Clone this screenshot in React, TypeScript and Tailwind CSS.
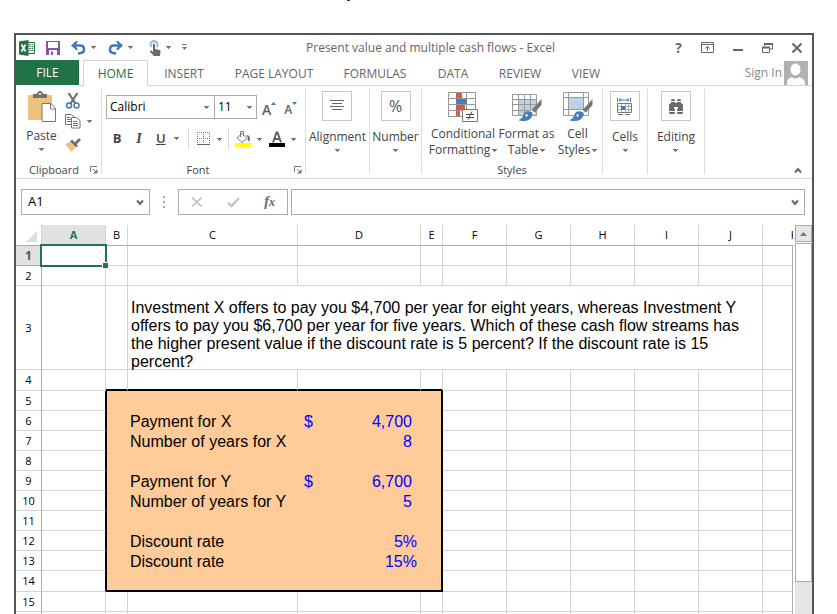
import React from 'react';
import { BsBinocularsFill } from 'react-icons/bs';

interface ColumnDef {
  name: string;
  width: string;
}

interface RowDef {
  id: number;
  height: string;
  label?: string;
  currency?: boolean;
  value?: string;
  percent?: boolean;
}

const tabs = [
  { name: 'INSERT', width: 'w-[72px]' },
  { name: 'PAGE LAYOUT', width: 'w-[108px]' },
  { name: 'FORMULAS', width: 'w-[94px]' },
  { name: 'DATA', width: 'w-[62px]' },
  { name: 'REVIEW', width: 'w-[72px]' },
  { name: 'VIEW', width: 'w-[60px]' },
];

// The last column has no width and takes what is left of the window
const columns: ColumnDef[] = [
  { name: 'A', width: 'w-16' },
  { name: 'B', width: 'w-[22px]' },
  { name: 'C', width: 'w-[170px]' },
  { name: 'D', width: 'w-[123px]' },
  { name: 'E', width: 'w-[22px]' },
  { name: 'F', width: 'w-16' },
  { name: 'G', width: 'w-16' },
  { name: 'H', width: 'w-16' },
  { name: 'I', width: 'w-16' },
  { name: 'J', width: 'w-16' },
  { name: 'K', width: '' },
];

const rows: RowDef[] = [
  { id: 1, height: 'h-5' },
  { id: 2, height: 'h-5' },
  { id: 3, height: 'h-[84px]' },
  { id: 4, height: 'h-[21px]' },
  { id: 5, height: 'h-5' },
  { id: 6, height: 'h-5', label: 'Payment for X', currency: true, value: '4,700' },
  { id: 7, height: 'h-5', label: 'Number of years for X', value: '8' },
  { id: 8, height: 'h-5' },
  { id: 9, height: 'h-5', label: 'Payment for Y', currency: true, value: '6,700' },
  { id: 10, height: 'h-5', label: 'Number of years for Y', value: '5' },
  { id: 11, height: 'h-5' },
  { id: 12, height: 'h-5', label: 'Discount rate', value: '5%', percent: true },
  { id: 13, height: 'h-5', label: 'Discount rate', value: '15%', percent: true },
  { id: 14, height: 'h-[21px]' },
  { id: 15, height: 'h-5' },
  { id: 16, height: 'h-5' },
];

const question =
  'Investment X offers to pay you $4,700 per year for eight years, whereas Investment Y offers to pay you $6,700 per year for five years. Which of these cash flow streams has the higher present value if the discount rate is 5 percent? If the discount rate is 15 percent?';

const Caret: React.FC<{ className?: string }> = ({ className = '' }) => (
  <svg width="5" height="3" viewBox="0 0 5 3" className={`shrink-0 ${className}`} aria-hidden="true">
    <path d="M0 0h5v1H4v1H3v1H2V2H1V1H0z" fill="#777" />
  </svg>
);

const Chevron: React.FC = () => (
  <svg width="8" height="7" viewBox="0 0 8 7" className="shrink-0" aria-hidden="true">
    <path d="M1 1.500l3 3.500 3-3.500" fill="none" stroke="#666" strokeWidth="2" />
  </svg>
);

const Launcher: React.FC<{ label: string }> = ({ label }) => (
  <button aria-label={label}>
    <svg width="8" height="8" viewBox="0 0 8 8" aria-hidden="true">
      <path d="M.5 6V.5H7M3 3l3 3" fill="none" stroke="#777" />
      <path d="M7.500 3v4.500H3z" fill="#777" />
    </svg>
  </button>
);

const ExcelLogo = () => (
  <svg width="16" height="16" viewBox="0 0 16 16" aria-hidden="true">
    <path d="M8 2.500h7.500v11H8" fill="#fff" stroke="#217346" />
    <path d="M10 4.500h1.500M12.500 4.500H14M10 6.500h1.500M12.500 6.500H14M10 8.500h1.500M12.500 8.500H14M10 10.500h1.500M12.500 10.500H14" stroke="#217346" />
    <path d="M0 1.500L9.500 0v16L0 14.500z" fill="#217346" />
    <path d="M2.500 4.500l4 7M6.500 4.500l-4 7" stroke="#fff" strokeWidth="1.700" />
  </svg>
);

const SaveIcon = () => (
  <svg width="14" height="14" viewBox="0 0 14 14" aria-hidden="true">
    <path d="M0 0h14v14H0z" fill="#8656a8" />
    <path d="M2 1h10v6H2zM3 9h8v5H3z" fill="#fff" />
    <path d="M5 10.500h2V14H5z" fill="#8656a8" />
  </svg>
);

const UndoIcon: React.FC<{ flip?: boolean }> = ({ flip }) => (
  <svg width="15" height="14" viewBox="0 0 15 14" className={flip ? '-scale-x-100' : ''} aria-hidden="true">
    <path d="M2 4.500h7a4 3.800 0 0 1 1 7.500l-3 .5" fill="none" stroke="#4478b0" strokeWidth="2.400" />
    <path d="M0 4.500L5 0h2L4.500 4.500 7 9H5z" fill="#4478b0" />
  </svg>
);

const TouchIcon = () => (
  <svg width="13" height="16" viewBox="0 0 13 16" aria-hidden="true">
    <path d="M2.500 7a3.500 3.500 0 1 1 5 0" fill="none" stroke="#9dbbd9" strokeWidth="2" />
    <path d="M4 4.500c0-1.300 2-1.300 2 0V9l4.500 1c1 .3 1 1 1 2l-.5 4H5l-4-4c-.8-1 .5-2 1.500-1.200L4 12z" fill="#6b6b6b" />
  </svg>
);

const PasteIcon = () => (
  <svg width="30" height="31" viewBox="0 0 30 31" aria-hidden="true">
    <path d="M1 4h24v25H1z" fill="#ecc27c" />
    <path d="M6 3h4c0-4 6-4 6 0h4v4H6z" fill="#707070" />
    <circle cx="13" cy="3" r="1" fill="#fff" />
    <path d="M15 12.500h9l4.500 5v13H15z" fill="#fff" stroke="#777" />
    <path d="M23.500 12.500V18h5" fill="none" stroke="#777" />
  </svg>
);

const CutIcon = () => (
  <svg width="16" height="16" viewBox="0 0 16 16" aria-hidden="true">
    <path d="M3.500 0l7 10.500M12.500 0l-7 10.500" stroke="#707070" strokeWidth="2.200" />
    <circle cx="4" cy="12.500" r="2.500" fill="none" stroke="#4478b0" strokeWidth="1.500" />
    <circle cx="11.500" cy="12.500" r="2.500" fill="none" stroke="#4478b0" strokeWidth="1.500" />
  </svg>
);

const CopyIcon = () => (
  <svg width="16" height="15" viewBox="0 0 16 15" aria-hidden="true">
    <path d="M.5.500h6l3 3v7h-9z" fill="#fff" stroke="#777" />
    <path d="M2 3.500h3M2 5.500h4M2 7.500h4" stroke="#4478b0" />
    <path d="M6.500 3.500h5l3.500 3v7.500H6.500z" fill="#fff" stroke="#777" />
    <path d="M8 7.500h4M8 9.500h5M8 11.500h5" stroke="#4478b0" />
  </svg>
);

const PainterIcon = () => (
  <svg width="16" height="14" viewBox="0 0 16 14" aria-hidden="true">
    <path d="M0 6l5-2 5.500 5.500L6.500 14z" fill="#ecc27c" />
    <path d="M5 3.500l2-2 6 6-2 2z" fill="#707070" />
    <path d="M9 5l5-5 2 2-5 5z" fill="#707070" />
  </svg>
);

const BorderIcon = () => (
  <svg width="13" height="14" viewBox="0 0 13 14" aria-hidden="true">
    <path d="M0 .5h13M0 6.500h13M.5 0v12M6.500 0v12M12.500 0v12" stroke="#777" strokeDasharray="1 1" />
    <path d="M0 12.500h13" stroke="#666" />
  </svg>
);

const FillIcon = () => (
  <svg width="16" height="16" viewBox="0 0 16 16" aria-hidden="true">
    <path d="M7 2.500l5 5-5 4-5-4.500z" fill="#fff" stroke="#777" />
    <path d="M5.500 6V.5h3V5" fill="none" stroke="#777" />
    <path d="M11 4c4 0 5 3 3 7-1-1-2-3-1-4z" fill="#4478b0" />
    <path d="M0 12h16v4H0z" fill="#ff0" />
  </svg>
);

const FontColorIcon = () => (
  <svg width="16" height="16" viewBox="0 0 16 16" aria-hidden="true">
    <path d="M4 11.500L7.500 1.500h1L12 11.500M5.500 8h5" fill="none" stroke="#606060" strokeWidth="2" />
    <path d="M0 12h16v4H0z" fill="#000" />
  </svg>
);

const AlignIcon = () => (
  <svg width="14" height="12" viewBox="0 0 14 12" aria-hidden="true">
    <path d="M0 .5h14M2 3.500h10M0 6.500h14M2 9.500h10" stroke="#666" />
  </svg>
);

const ConditionalIcon = () => (
  <svg width="30" height="31" viewBox="0 0 30 31" aria-hidden="true">
    <path d="M.5.500h27v24H.5zM.5 6.500h27M.5 12.500h27M.5 18.500h27M8.500.500v24M18.500.500v24" fill="#fff" stroke="#999" />
    <path d="M8 1h6v5H8zM8 13h9v5H8zM8 19h4v5H8z" fill="#d65b3c" />
    <path d="M8 7h11v5H8z" fill="#4a7db5" />
    <path d="M14.500 17.500h15v12h-15z" fill="#fff" stroke="#777" />
    <path d="M18 22.500h8M18 25.500h8M24 19.500l-4 8" stroke="#444" />
  </svg>
);

const Brush = () => (
  <>
    <path d="M29.500 7v6l-7 8-3.500-2.500z" fill="#777" />
    <path d="M18.500 18.500l4 3" stroke="#fff" strokeWidth="2" />
    <path d="M20 20c-6-2-8 0-9 4-1 2-3 4-5 4 5 2 11 1 13-2 1.500-2 1.500-4 1-6z" fill="#4a7db5" />
    <path d="M15 22c-1.500 0-2 1-1 3l2-1z" fill="#fff" />
  </>
);

const FormatTableIcon = () => (
  <svg width="30" height="29" viewBox="0 0 30 29" aria-hidden="true">
    <path d="M.5 2.500h24v21H.5z" fill="#fff" />
    <path d="M6 7h18v16H6z" fill="#bdd1ea" />
    <path d="M.5 2.500h24v21H.5zM.5 7.500h24M.5 12.500h24M.5 18.500h24M6.500 2.500v21M12.500 2.500v21M18.500 2.500v21" fill="none" stroke="#999" />
    <Brush />
  </svg>
);

const CellStylesIcon = () => (
  <svg width="30" height="29" viewBox="0 0 30 29" aria-hidden="true">
    <path d="M.5.500h25v23H.5zM.5 5.500h25M.5 17.500h25M5.500.500v23M20.500.500v23" fill="#fff" stroke="#999" />
    <path d="M6 6h14v11H6z" fill="#bdd1ea" />
    <Brush />
  </svg>
);

const CellsIcon = () => (
  <svg width="16" height="17" viewBox="0 0 16 17" aria-hidden="true">
    <path d="M.5 0v4M13.500 0v4M2 2h10M4 .5L2 2l2 1.500M10 .5L12 2l-2 1.500" fill="none" stroke="#4478b0" />
    <path d="M1 8.500h13M1 11.500h13M4.500 6v8M8.500 6v8M11.500 6v8" fill="none" stroke="#aaa" />
    <path d="M.5 5.500h14v9H.5zM1 16.500h5M8 16.500h5" fill="none" stroke="#777" />
    <path d="M4 8h4v4H4z" fill="#4478b0" />
  </svg>
);

const Separator = () => <div className="mt-[3px] mb-1 w-px shrink-0 bg-[#dcdcdc]" />;

const BoxGroup: React.FC<{ label: string; width: string; children: React.ReactNode }> = ({ label, width, children }) => (
  <div className={`flex shrink-0 justify-center pt-[5px] ${width}`}>
    <button className="flex flex-col items-center self-start">
      <span className="mb-2 flex h-[30px] w-[30px] items-center justify-center border border-[#c6c6c6] text-base text-[#555]">
        {children}
      </span>
      <span className="leading-4">{label}</span>
      <Caret className="mt-1" />
    </button>
  </div>
);

const TitleBar = () => (
  <header className="flex h-[25px] shrink-0 items-center pr-2.5 pl-[3px] text-[#666]">
    <div className="flex flex-1 items-center">
      <ExcelLogo />
      <button aria-label="Save" className="ml-[11px]"><SaveIcon /></button>
      <button aria-label="Undo" className="ml-[11px] flex items-center gap-[5px]"><UndoIcon /><Caret /></button>
      <button aria-label="Redo" className="ml-3 flex items-center gap-[5px]"><UndoIcon flip /><Caret /></button>
      <button aria-label="Touch mode" className="ml-4 flex items-center gap-1"><TouchIcon /><Caret /></button>
      <button aria-label="Customize toolbar" className="ml-[11px]">
        <svg width="5" height="7" viewBox="0 0 5 7" aria-hidden="true">
          <path d="M0 .5h5" stroke="#777" />
          <path d="M0 3h5L2.500 6z" fill="#777" />
        </svg>
      </button>
    </div>
    <h1 className="ml-10 whitespace-nowrap">Present value and multiple cash flows - Excel</h1>
    <div className="flex flex-1 items-center justify-end gap-[19px]">
      <button aria-label="Help" className="text-sm leading-4 font-bold">?</button>
      <button aria-label="Ribbon display options">
        <svg width="13" height="11" viewBox="0 0 13 11" aria-hidden="true">
          <path d="M.5.500h12v10H.5zM.5 2.500h12M6.500 9V5M4 6.500l2.500-2 2.500 2" fill="none" stroke="#666" />
        </svg>
      </button>
      <button aria-label="Minimize">
        <svg width="10" height="8" viewBox="0 0 10 8" aria-hidden="true"><path d="M0 6h10" stroke="#666" strokeWidth="2" /></svg>
      </button>
      <button aria-label="Restore">
        <svg width="11" height="10" viewBox="0 0 11 10" aria-hidden="true">
          <path d="M2.500 3V1h8v5H8M.5 4.500h7v5h-7z" fill="none" stroke="#666" />
          <path d="M2 1h9M0 4.500h8" stroke="#666" strokeWidth="2" />
        </svg>
      </button>
      <button aria-label="Close">
        <svg width="10" height="10" viewBox="0 0 10 10" aria-hidden="true"><path d="M.5.500l9 9M9.500.500l-9 9" stroke="#666" strokeWidth="2" /></svg>
      </button>
    </div>
  </header>
);

const TabBar = () => (
  <nav className="flex h-[26px] shrink-0 text-[#666]">
    <button className="h-[25px] w-[63px] shrink-0 bg-[#217346] text-white">FILE</button>
    <div className="w-1 shrink-0 border-b border-[#d4d4d4]" />
    <button className="w-[65px] shrink-0 border border-b-0 border-[#d4d4d4] text-[#217346]">HOME</button>
    <div className="flex flex-1 border-b border-[#d4d4d4]">
      {tabs.map((tab) => (
        <button key={tab.name} className={`shrink-0 pt-0.5 whitespace-nowrap ${tab.width}`}>{tab.name}</button>
      ))}
      <button className="mr-1 ml-auto flex items-center gap-0.5 whitespace-nowrap text-[#888]">
        Sign In
        <svg width="24" height="24" viewBox="0 0 24 24" aria-hidden="true">
          <path d="M0 0h24v24H0z" fill="#b1b1b1" />
          <ellipse cx="11.500" cy="8.500" rx="5" ry="6" fill="#fff" />
          <path d="M3 24c0-5 1-7 5-8 2 2 5 2 7 0 4 1 6 3 6 8z" fill="#fff" />
        </svg>
      </button>
    </div>
  </nav>
);

const Ribbon = () => (
  <section className="flex h-[93px] shrink-0 border-b border-[#d4d4d4] text-[#444]">
    {/* Clipboard */}
    <div className="flex w-[85px] shrink-0 flex-col justify-between pt-[5px]">
      <div className="flex">
        <button className="ml-2.5 flex w-[31px] flex-col items-center">
          <PasteIcon />
          <span className="mt-1.5 leading-4">Paste</span>
          <Caret className="mt-1" />
        </button>
        <div className="ml-2 flex flex-col items-start gap-[5px] pt-0.5">
          <button aria-label="Cut"><CutIcon /></button>
          <button aria-label="Copy" className="flex items-center gap-1.5"><CopyIcon /><Caret /></button>
          <button aria-label="Format painter" className="pt-1"><PainterIcon /></button>
        </div>
      </div>
      <div className="flex items-center pr-[3px] pl-[13px] text-[11px] leading-4">
        <span className="flex-1">Clipboard</span>
        <Launcher label="Clipboard options" />
      </div>
    </div>
    <Separator />

    {/* Font */}
    <div className="flex w-[203px] shrink-0 flex-col justify-between pt-[9px] pl-1">
      <div>
        <div className="flex h-6 items-center text-black">
          <button className="flex h-6 w-[109px] items-center justify-between border border-[#ababab] pr-[5px] pl-[3px]">Calibri<Caret /></button>
          <button className="-ml-px flex h-6 w-[43px] items-center justify-between border border-[#ababab] pr-1 pl-[3px]">11<Caret /></button>
          <button aria-label="Increase font size" className="ml-[5px] flex items-start pt-1.5 text-[#606060]">
            <span className="text-sm leading-6 font-semibold">A</span>
            <svg width="5" height="3" viewBox="0 0 5 3" className="mt-1" aria-hidden="true"><path d="M0 3h5L2.500 0z" fill="#4478b0" /></svg>
          </button>
          <button aria-label="Decrease font size" className="ml-2 flex items-start pt-1.5 text-[#606060]">
            <span className="text-xs leading-6 font-semibold">A</span>
            <svg width="5" height="3" viewBox="0 0 5 3" className="mt-1" aria-hidden="true"><path d="M0 0h5L2.500 3z" fill="#4478b0" /></svg>
          </button>
        </div>
        <div className="mt-[5px] flex h-[30px] items-center text-[13px]">
          <button className="w-[22px] font-bold">B</button>
          <button className="w-[22px] font-['Liberation_Serif',serif] text-sm font-bold italic">I</button>
          <button className="flex w-[30px] items-center gap-2 pl-1.5 font-semibold"><span className="underline">U</span><Caret /></button>
          <div className="mx-2 h-[22px] w-px bg-[#dcdcdc]" />
          <button aria-label="Borders" className="flex items-center gap-[7px]"><BorderIcon /><Caret /></button>
          <div className="mx-1.5 h-[22px] w-px bg-[#dcdcdc]" />
          <button aria-label="Fill color" className="flex items-center gap-1.5"><FillIcon /><Caret /></button>
          <button aria-label="Font color" className="ml-[7px] flex items-center gap-1.5"><FontColorIcon /><Caret /></button>
        </div>
      </div>
      <div className="flex items-center pr-[3px] text-[11px] leading-4">
        <span className="flex-1 pr-1 text-center">Font</span>
        <Launcher label="Font options" />
      </div>
    </div>
    <Separator />

    <BoxGroup label="Alignment" width="w-[63px]"><AlignIcon /></BoxGroup>
    <Separator />
    <BoxGroup label="Number" width="w-[51px]">%</BoxGroup>
    <Separator />

    {/* Styles */}
    <div className="flex w-[180px] shrink-0 flex-col justify-between pt-1.5">
      <div className="flex justify-center gap-[3px] pl-1 leading-4 whitespace-nowrap">
        <button className="flex w-[67px] flex-col items-center">
          <ConditionalIcon />
          <span className="mt-[3px]">Conditional</span>
          <span className="flex items-center gap-0.5">Formatting<Caret /></span>
        </button>
        <button className="flex w-[54px] flex-col items-center">
          <FormatTableIcon />
          <span className="mt-[5px]">Format as</span>
          <span className="flex items-center gap-0.5">Table<Caret /></span>
        </button>
        <button className="flex w-[42px] flex-col items-center">
          <CellStylesIcon />
          <span className="mt-[5px]">Cell</span>
          <span className="flex items-center gap-0.5">Styles<Caret /></span>
        </button>
      </div>
      <div className="text-center text-[11px] leading-4">Styles</div>
    </div>
    <Separator />

    <BoxGroup label="Cells" width="w-11"><CellsIcon /></BoxGroup>
    <Separator />
    <BoxGroup label="Editing" width="w-14"><BsBinocularsFill size={16} color="#6b6b6b" /></BoxGroup>
    <Separator />
    <button aria-label="Collapse the ribbon" className="mt-auto mr-2.5 mb-1 ml-auto rotate-180"><Chevron /></button>
  </section>
);

const FormulaBar = () => (
  <section className="mt-2.5 mr-[7px] ml-[5px] flex h-[26px] shrink-0">
    <label className="flex w-[129px] shrink-0 items-center border border-[#ababab] pr-[5px] pl-1.5">
      <input aria-label="Name box" defaultValue="A1" className="mb-0.5 w-0 flex-1 text-[13px] leading-5 text-black outline-none" />
      <Chevron />
    </label>
    <div className="flex w-7 shrink-0 flex-col items-center justify-center gap-[3px]">
      <i className="h-0.5 w-0.5 bg-[#aaa]" />
      <i className="h-0.5 w-0.5 bg-[#aaa]" />
      <i className="h-0.5 w-0.5 bg-[#aaa]" />
    </div>
    <div className="mr-[3px] flex w-[110px] shrink-0 items-center justify-around border border-[#ababab]">
      <button aria-label="Cancel">
        <svg width="12" height="10" viewBox="0 0 12 10" aria-hidden="true"><path d="M1 .5l9.500 9M10.500.500L1 9.500" stroke="#c6c6c6" strokeWidth="1.800" /></svg>
      </button>
      <button aria-label="Enter">
        <svg width="13" height="11" viewBox="0 0 13 11" aria-hidden="true"><path d="M1 5.500L4.500 9 12 1" fill="none" stroke="#c6c6c6" strokeWidth="2.400" /></svg>
      </button>
      <button aria-label="Insert function" className="font-['Liberation_Serif',serif] text-sm leading-4 font-bold text-[#666] italic">
        f<span className="text-xs">x</span>
      </button>
    </div>
    <label className="flex flex-1 items-center border border-[#ababab] pr-[5px] pl-1.5">
      <input aria-label="Formula bar" className="w-0 flex-1 text-[13px] leading-5 text-black outline-none" />
      <Chevron />
    </label>
  </section>
);

const SheetRow: React.FC<{ row: RowDef }> = ({ row }) => {
  const shaded = row.id >= 5 && row.id <= 14;

  const cellClass = (name: string) => {
    const inside = 'BCDE'.includes(name);
    if (shaded && inside) {
      return [
        'bg-[#ffcb99]',
        name === 'B' ? 'border-l border-black' : '',
        name === 'E' ? 'border-r-2 border-black' : '',
        row.id === 14 ? 'border-b-2 border-black' : '',
      ].join(' ');
    }
    if (row.id === 4 && inside) return 'border-r border-b-2 border-r-[#d4d4d4] border-b-black';
    if (shaded && name === 'A') return 'border-r border-b border-r-black border-b-[#d4d4d4]';
    if (name === 'K') return 'border-r border-b border-r-[#ababab] border-b-[#d4d4d4]';
    return 'border-r border-b border-[#d4d4d4]';
  };

  const cellContent = (name: string) => {
    // Selected cell
    if (name === 'A' && row.id === 1) {
      return (
        <div className="absolute -inset-x-0.5 -inset-y-0.5 z-10 border-2 border-[#217346]">
          <span className="absolute -right-[3px] -bottom-[3px] h-1.5 w-1.5 border-t border-l border-white bg-[#217346]" />
        </div>
      );
    }
    if (name === 'C' && row.label) return <div className="pl-0.5">{row.label}</div>;
    if (name === 'D' && row.value) {
      return (
        <div className={`flex pl-1.5 text-[#0000ff] ${row.percent ? 'pr-1' : 'pr-[9px]'}`}>
          {row.currency && <span>$</span>}
          <span className="ml-auto">{row.value}</span>
        </div>
      );
    }
    return null;
  };

  return (
    <tr className={row.height}>
      <th
        scope="row"
        className={
          row.id === 1
            ? 'border-r border-b border-[#ababab] bg-[#e1e1e1] text-xs leading-4 font-bold text-[#217346]'
            : 'border-r border-b border-r-[#ababab] border-b-[#d4d4d4] text-[11px] leading-4 font-normal'
        }
      >
        {row.id}
      </th>
      {row.id === 3 ? (
        <>
          <td className={cellClass('A')} />
          <td className={cellClass('B')} />
          <td colSpan={8} className="border-r border-b border-[#d4d4d4] pr-3 pl-[3px] align-bottom">
            <div className="-mb-0.5">{question}</div>
          </td>
          <td className={cellClass('K')} />
        </>
      ) : (
        columns.map((col) => (
          <td
            key={col.name}
            className={`align-bottom ${col.name === 'A' && row.id === 1 ? 'relative' : ''} ${cellClass(col.name)}`}
          >
            {cellContent(col.name)}
          </td>
        ))
      )}
    </tr>
  );
};

const Sheet = () => (
  <main className="mt-2.5 flex min-h-0 flex-1">
    <div className="flex-1 overflow-hidden">
      <table className="w-full table-fixed border-separate border-spacing-0 text-black">
        <thead className="text-[11px] leading-4">
          <tr className="h-[21px]">
            <th aria-label="Select all" className="w-[26px] border-r border-b border-r-[#d4d4d4] border-b-[#ababab]">
              <svg width="11" height="11" viewBox="0 0 11 11" className="mt-0.5 ml-2.5" aria-hidden="true">
                <path d="M11 0v11H0z" fill="#dedede" />
              </svg>
            </th>
            {columns.map((col) =>
              col.name === 'K' ? (
                <th key={col.name} scope="col" className="overflow-hidden border-b border-[#ababab] font-normal">
                  <div className="w-[62px] text-center">{col.name}</div>
                </th>
              ) : (
                <th
                  key={col.name}
                  scope="col"
                  className={`border-r border-b border-r-[#d4d4d4] border-b-[#ababab] ${col.width} ${
                    col.name === 'A' ? 'bg-[#e1e1e1] font-bold text-[#217346]' : 'font-normal'
                  }`}
                >
                  {col.name}
                </th>
              )
            )}
          </tr>
        </thead>
        <tbody className="font-['Liberation_Sans',Arial,sans-serif] text-base leading-[18px] [&_th]:font-['Open_Sans',sans-serif]">
          {rows.map((row) => (
            <SheetRow key={row.id} row={row} />
          ))}
        </tbody>
      </table>
    </div>
    <div className="flex w-[19px] shrink-0 flex-col pl-0.5">
      <button aria-label="Scroll up" className="flex h-[17px] shrink-0 items-center justify-center border border-[#ababab] bg-[#e6e6e6]">
        <svg width="7" height="4" viewBox="0 0 7 4" aria-hidden="true"><path d="M0 4h7L3.500 0z" fill="#777" /></svg>
      </button>
      <div className="mt-px h-[339px] shrink-0 border border-[#ababab] bg-white" />
      <div className="flex-1 bg-[#e6e6e6]" />
    </div>
  </main>
);

const App: React.FC = () => (
  <div className="h-screen overflow-hidden bg-white pr-[23px] pl-3.5 font-['Open_Sans','Noto_Sans',sans-serif] text-xs">
    <div className="flex h-[33px] justify-center">
      <i className="mr-[132px] h-px w-[3px] bg-[#333]" />
    </div>
    <div className="flex h-[calc(100vh-33px)] flex-col border-x-2 border-t-2 border-[#555]">
      <TitleBar />
      <TabBar />
      <Ribbon />
      <FormulaBar />
      <Sheet />
    </div>
  </div>
);

export default App;
